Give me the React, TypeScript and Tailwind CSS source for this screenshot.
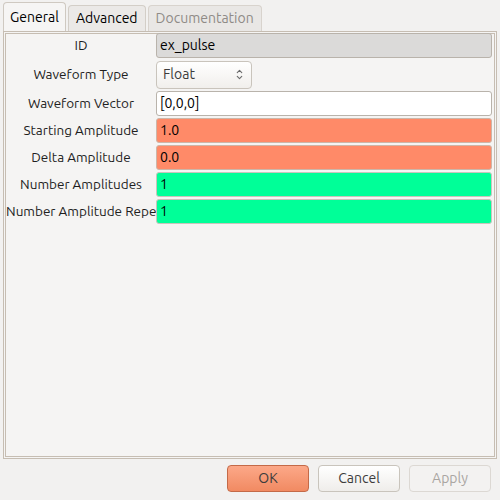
import { ChevronDown, ChevronUp } from "lucide-react"

const font = { fontFamily: "Ubuntu, 'Open Sans', 'DejaVu Sans', sans-serif" }

type Row = { label: string; value: string; kind: "readonly" | "combo" | "text" | "orange" | "green" }

const rows: Row[] = [
  { label: "ID", value: "ex_pulse", kind: "readonly" },
  { label: "Waveform Type", value: "Float", kind: "combo" },
  { label: "Waveform Vector", value: "[0,0,0]", kind: "text" },
  { label: "Starting Amplitude", value: "1.0", kind: "orange" },
  { label: "Delta Amplitude", value: "0.0", kind: "orange" },
  { label: "Number Amplitudes", value: "1", kind: "green" },
  { label: "Number Amplitude Repeats", value: "1", kind: "green" },
]

function Field({ row }: { row: Row }) {
  if (row.kind === "combo") {
    return (
      <div className="w-[96px] h-[28px] flex items-center justify-between pl-[6px] pr-[7px] rounded-[4px] border border-[#c9c4bc] bg-gradient-to-b from-white to-[#f1efec] text-[#3c3c3c]">
        <span className="text-[14px]">{row.value}</span>
        <span className="flex flex-col items-center text-[#6b6b6b] -space-y-[3px]">
          <ChevronUp size={9} strokeWidth={3} />
          <ChevronDown size={9} strokeWidth={3} />
        </span>
      </div>
    )
  }
  const bg =
    row.kind === "readonly"
      ? "bg-[#dbdad9] border-[#b9b3ab]"
      : row.kind === "orange"
        ? "bg-[#ff8a68] border-[#cdb6a8]"
        : row.kind === "green"
          ? "bg-[#00ff98] border-[#c9c4bc]"
          : "bg-white border-[#b9b3ab]"
  return (
    <div className={`flex-1 h-[25px] flex items-center px-[3px] rounded-[3px] border text-[14px] text-black ${bg}`}>
      {row.value}
    </div>
  )
}

export default function App() {
  return (
    <div className="w-[500px] h-[500px] bg-[#f2f1f0] flex flex-col text-[13px] text-[#3c3c3c]" style={font}>
      {/* Tabs */}
      <div className="flex items-end gap-[2px] pl-[3px] pt-[3px] h-[31px]">
        <div className="h-[29px] px-[6px] flex items-center rounded-t-[4px] border border-b-0 border-[#cfc9c1] bg-[#f6f5f4] text-[14px] text-black">
          General
        </div>
        <div className="h-[26px] px-[7px] flex items-center rounded-t-[4px] border border-b-0 border-[#d3cec7] bg-[#ebe9e7] text-[14px] text-black">
          Advanced
        </div>
        <div className="h-[26px] px-[7px] flex items-center rounded-t-[4px] border border-b-0 border-[#d8d3cd] bg-[#e9e7e5] text-[14px] text-[#8f8b87]">
          Documentation
        </div>
      </div>

      {/* Panel */}
      <div className="mx-[3px] h-[428px] border-[3px] border-double border-[#c6bdb2] bg-[#f5f4f3] pr-[2px]">
        <div className="-mt-[1px] flex flex-col gap-[2px]">
          {rows.map((row, i) => (
            <div key={i} className={`flex items-center ${row.kind === "combo" ? "h-[29px]" : "h-[25px]"}`}>
              <div className={`w-[150px] shrink-0 overflow-hidden whitespace-nowrap text-[13.5px] text-[#1e1e1e] flex ${row.label.length > 20 ? "justify-start" : "justify-center"}`}>
                <span>{row.label}</span>
              </div>
              <Field row={row} />
            </div>
          ))}
        </div>
      </div>

      {/* Buttons */}
      <div className="flex justify-end gap-[9px] pr-[9px] pt-[6px] text-[14px]">
        <button className="w-[82px] h-[27px] rounded-[4px] border border-[#c46a48] bg-gradient-to-b from-[#fca888] to-[#f18a62] text-[#3c3c3c]">
          OK
        </button>
        <button className="w-[82px] h-[27px] rounded-[4px] border border-[#c9c4bc] bg-gradient-to-b from-white to-[#efedea] text-[#3c3c3c]">
          Cancel
        </button>
        <button className="w-[82px] h-[27px] rounded-[4px] border border-[#dcd8d3] bg-[#f3f2f1] text-[#a9a5a1]">
          Apply
        </button>
      </div>
    </div>
  )
}
